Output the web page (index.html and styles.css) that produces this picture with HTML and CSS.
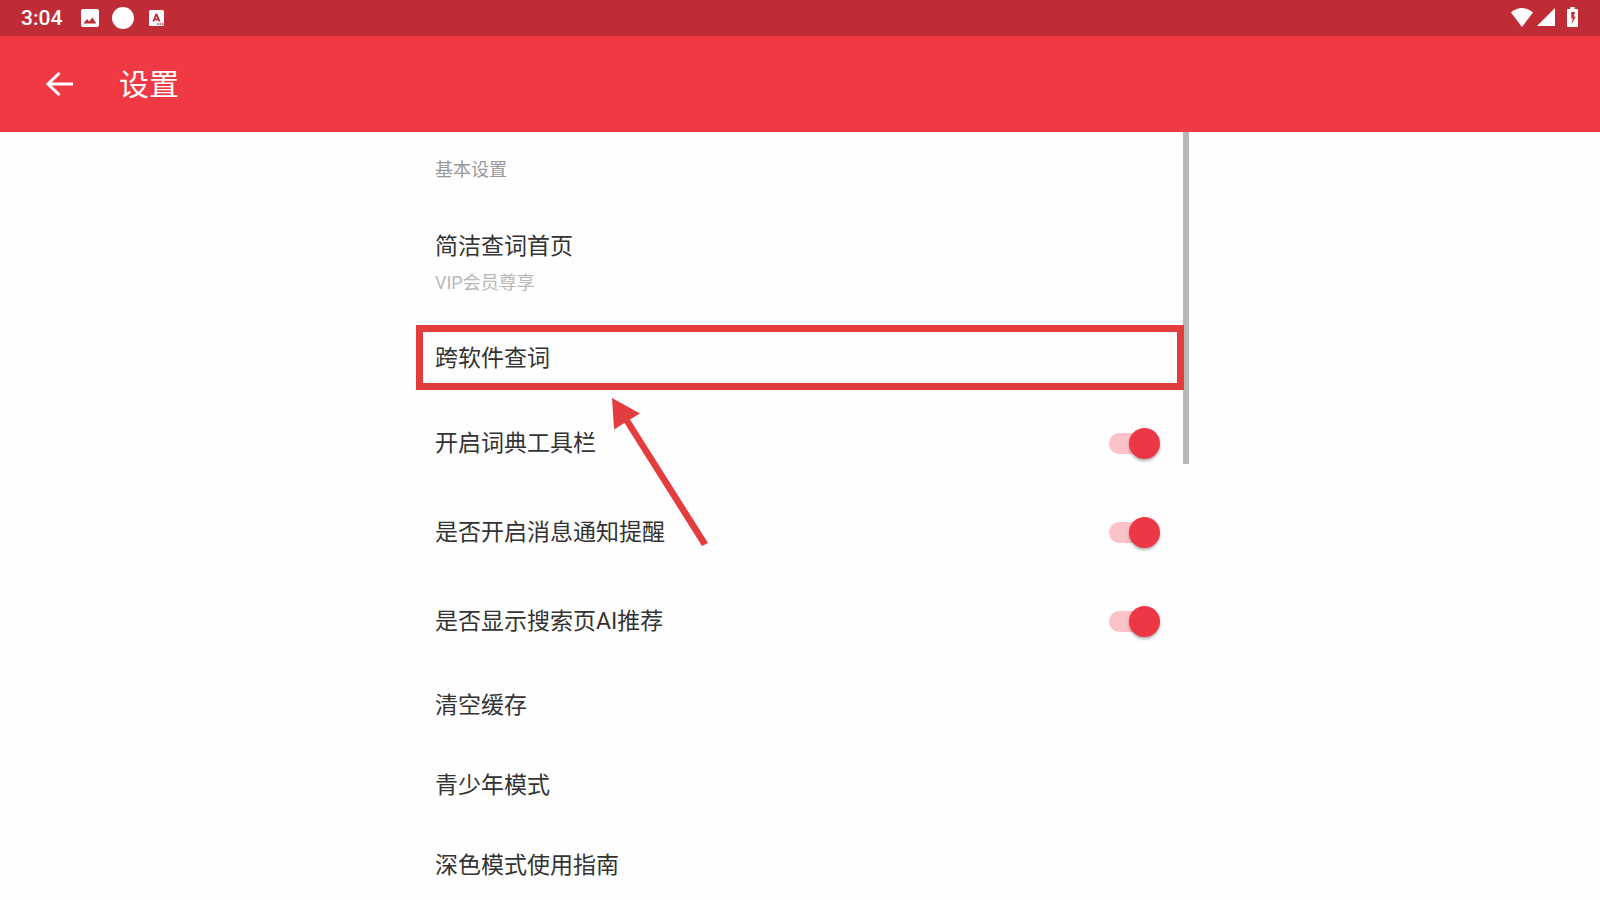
FILE: index.html
```html
<!DOCTYPE html>
<html lang="zh-CN">
<head>
<meta charset="utf-8">
<title>设置</title>
<meta name="viewport" content="width=device-width, initial-scale=1">
<link rel="stylesheet" href="styles.css">
</head>
<body>
<div class="status-bar">
  <div class="status-left">
    <time class="clock">3:04</time>
    <svg class="icon-picture" viewBox="0 0 18 18" aria-hidden="true"><path fill="#fff" fill-rule="evenodd" d="M2 0h14a2 2 0 0 1 2 2v14a2 2 0 0 1-2 2H2a2 2 0 0 1-2-2V2a2 2 0 0 1 2-2zM2.400 14.500h13L11.300 8.600 8.200 12.600 6 10z"/></svg>
    <svg class="icon-dot" viewBox="0 0 22 22" aria-hidden="true"><circle cx="11" cy="11" r="11" fill="#fff"/></svg>
    <svg class="icon-letter" viewBox="0 0 15 16" aria-hidden="true"><rect width="15" height="16" rx="1.500" fill="#fff"/><path d="M4.300 11.500 7.200 4.300h.4l2.900 7.200M5.300 9.300h4.200" fill="none" stroke="#bf2c35" stroke-width="1.800"/><path d="M8 14h1.500M10.500 14H12M13 14h1.500" stroke="#bf2c35" stroke-width="1.300"/></svg>
  </div>
  <div class="status-right">
    <svg class="icon-wifi" viewBox="0 0 22 19" aria-hidden="true"><path fill="#fff" d="M11 19 0 4.500C3 1.500 7 0 11 0s8 1.500 11 4.500z"/></svg>
    <svg class="icon-signal" viewBox="0 0 18 18" aria-hidden="true"><path fill="#fff" d="M18 0v18H0z"/></svg>
    <svg class="icon-battery" viewBox="0 0 11 20" aria-hidden="true"><path fill="#fff" fill-rule="evenodd" d="M3.300 0h4.400v2H10a1 1 0 0 1 1 1v16a1 1 0 0 1-1 1H1a1 1 0 0 1-1-1V3a1 1 0 0 1 1-1h2.300zM4.300 5v6.500h1.500L4.300 17.500 8.800 9.500H6.500L8.300 5z"/></svg>
  </div>
</div>
<header class="app-bar">
  <button class="back" type="button" aria-label="返回">
    <svg class="icon-back" viewBox="0 0 28 24" aria-hidden="true"><path d="M27 12H2M13.500 1 2 12 13.500 23" fill="none" stroke="#fff" stroke-width="3"/></svg>
  </button>
  <h1 class="title">设置</h1>
</header>
<main class="content">
  <div class="panel">
    <h2 class="section-title">基本设置</h2>
    <ul class="settings">
      <li><button class="row row-double" type="button"><span>简洁查词首页</span><small class="hint">VIP会员尊享</small></button></li>
      <li class="marked">
        <button class="row" type="button">跨软件查词</button>
        <span class="frame"></span>
        <svg class="arrow" viewBox="0 0 96 150" aria-hidden="true"><path fill="#e43d3e" d="M0 0 28 15.500 18 21.500 96 145 90 148 12.500 25 2 31.500z"/></svg>
      </li>
      <li><label class="row row-switch" for="toolbar"><span>开启词典工具栏</span><input class="switch" id="toolbar" type="checkbox" role="switch" checked></label></li>
      <li><label class="row row-switch" for="notify"><span>是否开启消息通知提醒</span><input class="switch" id="notify" type="checkbox" role="switch" checked></label></li>
      <li><label class="row row-switch" for="suggest"><span>是否显示搜索页AI推荐</span><input class="switch" id="suggest" type="checkbox" role="switch" checked></label></li>
      <li><button class="row" type="button">清空缓存</button></li>
      <li><button class="row" type="button">青少年模式</button></li>
      <li><button class="row" type="button">深色模式使用指南</button></li>
    </ul>
    <div class="scroll-thumb"></div>
  </div>
</main>
</body>
</html>
```
FILE: styles.css
```css
* {
  box-sizing: border-box;
}

body {
  display: flex;
  flex-direction: column;
  height: 100vh;
  margin: 0;
  overflow: hidden;
  background: #fefefe;
  color: #333;
  font-family: Roboto, "Noto Sans CJK SC", sans-serif;
}

button {
  border: 0;
  background: none;
  color: inherit;
  font: inherit;
  cursor: pointer;
}

svg {
  display: block;
}

.status-bar {
  display: flex;
  flex: none;
  justify-content: space-between;
  height: 36px;
  padding: 0 22px 0 21px;
  background: #bf2c35;
  color: #fff;
}

.status-left,
.status-right {
  display: flex;
  align-items: center;
}

.status-right {
  padding-bottom: 2px;
}

.clock {
  margin-right: 19px;
  font-size: 21px;
  font-weight: 500;
  line-height: 36px;
}

.icon-picture {
  width: 18px;
  height: 18px;
  margin-right: 13px;
}

.icon-dot {
  width: 22px;
  height: 22px;
  margin-right: 15px;
}

.icon-letter {
  width: 15px;
  height: 16px;
}

.icon-wifi {
  width: 22px;
  height: 19px;
  margin-right: 4px;
}

.icon-signal {
  width: 18px;
  height: 18px;
  margin-right: 12px;
}

.icon-battery {
  width: 11px;
  height: 20px;
}

.app-bar {
  display: flex;
  flex: none;
  align-items: center;
  gap: 35px;
  height: 96px;
  padding: 0 36px;
  background: #f13944;
  color: #fff;
}

.back {
  padding: 10px;
}

.icon-back {
  width: 28px;
  height: 24px;
}

.title {
  margin: 0;
  font-size: 30px;
  font-weight: 400;
  line-height: 41px;
}

.content {
  flex: 1;
  min-height: 0;
}

.panel {
  position: relative;
  max-width: 778px;
  margin: 0 auto;
}

.section-title {
  margin: 0;
  padding: 24px 24px 22px;
  color: #999;
  font-size: 18px;
  font-weight: 400;
  line-height: 28px;
}

.settings {
  margin: 0;
  padding: 0;
  list-style: none;
}

.row {
  display: flex;
  align-items: center;
  width: 100%;
  min-height: 80px;
  padding: 0 24px;
  font-size: 23px;
  line-height: 36px;
  text-align: left;
}

.row-double {
  flex-direction: column;
  align-items: flex-start;
  padding: 23px 24px 18px;
}

.hint {
  color: #b8b8b8;
  font-size: 18px;
  line-height: 36px;
}

.row-switch {
  justify-content: space-between;
  min-height: 89px;
  padding-right: 29px;
  cursor: pointer;
}

.switch {
  position: relative;
  width: 51px;
  height: 31px;
  margin: 0;
  appearance: none;
  cursor: pointer;
}

.switch::before {
  position: absolute;
  inset: 5px 5px 5px 0;
  border-radius: 11px;
  background: #ddd;
  content: "";
}

.switch::after {
  position: absolute;
  top: 0;
  left: 0;
  width: 31px;
  height: 31px;
  border-radius: 50%;
  background: #f5f5f5;
  box-shadow: 0 2px 3px rgba(0, 0, 0, 0.3);
  content: "";
}

.switch:checked::before {
  background: #fbc2c8;
}

.switch:checked::after {
  right: 0;
  left: auto;
  background: #ed3744;
}

.marked {
  position: relative;
}

.frame {
  position: absolute;
  z-index: 2;
  inset: 6px 5px 9px;
  border: 7px solid #e43d3e;
  pointer-events: none;
}

.arrow {
  position: absolute;
  z-index: 2;
  top: 79px;
  left: 201px;
  width: 96px;
  height: 150px;
  pointer-events: none;
}

.scroll-thumb {
  position: absolute;
  z-index: 1;
  top: 0;
  right: 0;
  width: 6px;
  height: 332px;
  background: #b7b7b7;
}
```
